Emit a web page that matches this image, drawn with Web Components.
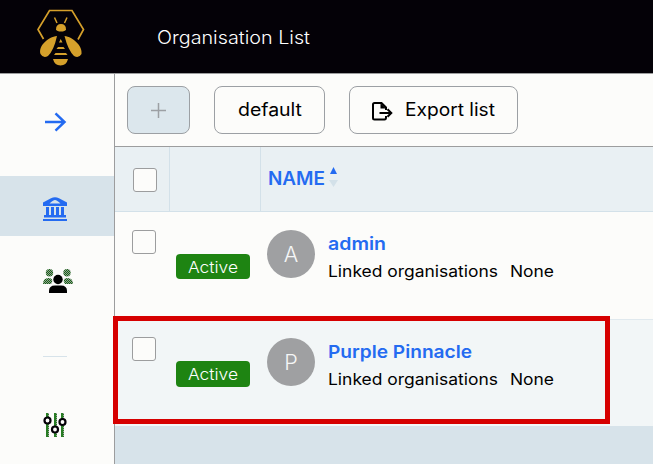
<!DOCTYPE html>
<html lang="en"><head><meta charset="utf-8"><title>Organisation List</title>
<style>body{margin:0;background:#fcfcfa;font-family:Inter,"Liberation Sans",sans-serif;color:#000;overflow:hidden}</style></head><body>
<org-app></org-app>
<script>
const define=(name,html,setup)=>customElements.define(name,class extends HTMLElement{
  connectedCallback(){
    if(this.shadowRoot)return;
    const t=document.createElement('template');
    t.innerHTML='<style>*{box-sizing:border-box}svg{display:block}</style>'+(typeof html==='function'?html(this):html);
    this.attachShadow({mode:'open'}).append(t.content.cloneNode(true));
    if(setup)setup(this);
  }
});
// Widens its letters so that the label has the given width.
define('fit-text','<style>:host{display:inline-block;white-space:pre;text-align:left}span{display:inline-block;transform-origin:0 50%}</style><span><slot></slot></span>',el=>{
  const s=el.shadowRoot.querySelector('span'),w=+el.getAttribute('width');
  s.style.transform='scaleX('+w/s.getBoundingClientRect().width+')';
  el.style.width=w+'px';
});
define('bee-logo',`<style>:host{display:block;width:50px;height:60px}</style>
<svg width="50" height="60" viewBox="36 8 50 60" fill="#d5a02b"><path d="M43.5 39 38 29.5 49.5 10.5H72L83.5 29.5 78 39.5" fill="none" stroke="#d5a02b" stroke-width="1.7"/>
<path d="M54.5 17.5 57 23M67 17.5 64.5 23" fill="none" stroke="#d5a02b" stroke-width="1.5"/><path d="M56 29.5Q56 24 61 24Q66 24 66 29.5Q65 31.5 61 31.5Q57 31.5 56 29.5Z"/>
<path d="M57 36Q54 50 48 56Q43 58.500 40.500 54C38 46 48 37 57 36ZM64.500 36Q68 50 74 56Q79 58.500 81.500 54C83 46 73 37 64.500 36Z"/>
<path d="M60.700 39 62.500 42.500H59ZM58 47H63.500L65 49H56.500ZM55.500 53H66L67.500 55H54ZM53 59H68Q66.500 65.500 60.500 65.500Q54.500 65.500 53 59Z"/></svg>`);
define('app-header',`<style>:host{display:flex;height:74px;box-sizing:border-box;padding:0 36px;background:#040107;border-bottom:1px solid #9c9d9e;color:#fff;font-size:18px;font-weight:300}bee-logo{margin:8px 71px 0 0}.t{line-height:24px;margin-top:26px}</style><bee-logo></bee-logo><div class="t"><slot></slot></div>`);
define('side-bar',`<style>:host{display:flex;flex-direction:column;box-sizing:border-box;width:115px;background:#fcfcfa;border-right:1px solid #9c9d9e}
div{height:60px;padding-left:43px;display:flex;align-items:center;flex:none}.a{height:102px;padding-bottom:6px}.on{background:#d7e3ea}hr{border:0;border-top:1px solid #d7e3ea;width:24px;margin:45px 0 25px 43px}</style>
<div class="a"><svg width="24" height="24" fill="none" stroke="#246bf1" stroke-width="2.500"><path d="M2 12H22M12.500 3.300 21.500 12 12.500 20.700"/></svg></div>
<div class="on" style="padding-top:6px"><svg width="24" height="24" fill="#246bf1"><path fill-rule="evenodd" d="M0 5.500 8 1.200Q12-.5 16 1.200L24 5.500V9H0ZM6.500 6.500H17.500Q14 3 12 3T6.500 6.500Z"/><path d="M3 10H6V18H3ZM8 10H11V18H8ZM13 10H16V18H13ZM18 10H21V18H18ZM1 18H23V20.500H1ZM0 22H24V24H0Z"/></svg></div>
<div style="height:90px"><svg width="30" height="24" shape-rendering="auto"><defs><pattern id="d" width="2" height="2" patternUnits="userSpaceOnUse"><path fill="#999" d="M0 0H2V2H0Z"/><path fill="#126b10" d="M0 0H1V1H0ZM1 1H2V2H1Z"/></pattern></defs><g fill="url(#d)"><circle cx="6.500" cy="3.700" r="3.700"/><circle cx="24" cy="3.700" r="3.700"/><path d="M0 15Q0 9 5.500 9Q9 9 9.500 12L8 15ZM30 15Q30 9 24.500 9Q21 9 20.500 12L22 15Z"/></g><circle cx="15" cy="10.500" r="5.700" fill="#fcfcfa"/><circle cx="15" cy="10.500" r="4.700"/><path d="M6 24V22Q6 16.500 12 16.500H18Q24 16.500 24 22V24Z"/></svg></div>
<hr style="margin-top:30px"><div style="height:86px"><svg width="24" height="24"><g stroke="#287d24" stroke-width="3"><path d="M4.500 0V24M12.500 0V24M19.500 0V24"/></g><g stroke="#a8a8a8" stroke-dasharray="1 1"><path d="M5.500 0V24M13.500 0V24M20.500 0V24"/></g><g fill="#fcfcfa" stroke="#040107" stroke-width="2.200"><circle cx="4.500" cy="7.500" r="3"/><circle cx="12" cy="16.500" r="3"/><circle cx="19.500" cy="9" r="3"/></g></svg></div>`);
define('tool-button',`<style>:host{display:flex;align-items:center;justify-content:center;height:48px;border:1px solid #9ca0a4;border-radius:8px;font-size:18px;line-height:24px;box-sizing:border-box}:host([muted]){background:#dce7ed}</style><slot></slot>`);
define('tool-bar',`<style>:host{display:flex;gap:24px;height:73px;box-sizing:border-box;padding:12px 12px;border-bottom:1px solid #9c9d9e}svg{margin-right:12px}</style>
<tool-button muted style="width:63px"><svg style="margin:0" width="15" height="15" stroke="#9ca0a4" stroke-width="1.500"><path d="M0 7.500H15M7.500 0V15"/></svg></tool-button>
<tool-button style="width:111px"><fit-text width="64">default</fit-text></tool-button>
<tool-button style="width:169px"><svg style="margin-top:2px" width="21" height="19" fill="none" stroke="#000" stroke-width="2"><path d="M14 8V5.500L9.500 1H2.500Q1 1 1 2.500V16Q1 17.500 2.500 17.500H12.500Q14 17.500 14 15.500V14M7.500 11H19M15.500 7.200 19.300 11 15.500 14.800"/><path d="M8.500 1V6.500H14Z" fill="#000" stroke="none"/></svg><fit-text width="90">Export list</fit-text></tool-button>`);
define('check-box',`<style>:host{display:block;box-sizing:border-box;width:24px;height:24px;border:1px solid #9c9d9e;border-radius:3px;background:#fcfcfa;flex:none}</style>`);
define('table-head',`<style>:host{display:grid;grid-template-columns:55px 91px 1fr;height:65px;box-sizing:border-box;background:#e9f0f3;border-bottom:1px solid #d3e1e9;color:#246bf1}div{border-right:1px solid #d3e1e9}check-box{margin:21px 0 0 18px}.n{border:0;display:flex;padding:20px 0 0 7px;font-size:18px;line-height:24px;font-weight:600}svg{margin:0 0 0 4px}</style>
<div><check-box></check-box></div><div></div><div class="n"><fit-text width="57">NAME</fit-text><svg width="9" height="22"><path fill="#246bf1" d="M4.500 0 8 7H1Z"/><path fill="#d3e1e9" d="M0 13H9L4.500 20Z"/></svg></div>`);
define('org-row',el=>`<style>:host{display:grid;grid-template-columns:61px 91px 60px 1fr;height:108px;box-sizing:border-box;border-bottom:1px solid #e0e9ee}:host([shade]){background:#f2f6f7;height:106px;border:0}
check-box{margin:18px 0 0 17px}.b{width:74px;height:25px;margin-top:42px;border-radius:4px;background:#1e8412;color:#fff;font-size:16.500px;line-height:26px;text-align:center;font-weight:300}.v{width:48px;height:48px;margin-top:18px;border-radius:50%;background:#9fa0a2;color:#f5f6f6;font-size:21.500px;line-height:49px;text-align:center;font-weight:300}
.c{padding:20px 0 0 1px}.h{font-size:17.500px;line-height:24px;color:#246bf1;font-weight:600}.l{display:flex;gap:12px;font-size:16px;line-height:20px;margin-top:5px}
:host([shade]) check-box{margin-top:17px}:host([shade]) .b{margin-top:41px;height:26px}</style>
<check-box></check-box><div class="b"><fit-text width="50">Active</fit-text></div><div class="v">${el.getAttribute('initial')}</div><div class="c"><div class="h"><fit-text width="${el.getAttribute('w')}">${el.getAttribute('name')}</fit-text></div><div class="l"><fit-text width="170">Linked organisations</fit-text><fit-text width="44">None</fit-text></div></div>`);
define('focus-frame',`<style>:host{position:absolute;left:113px;top:316px;width:497px;height:108px;box-sizing:border-box;border:5px solid #d60000}</style>`);
define('org-app',`<style>:host{display:block;position:relative;width:653px;height:464px;overflow:hidden}.m{display:flex;height:390px}main{flex:1;background:#d7e3ea}.p{background:#fcfcfa}</style>
<app-header><fit-text width="153">Organisation List</fit-text></app-header><div class="m"><side-bar></side-bar><main><div class="p"><tool-bar></tool-bar><table-head></table-head><org-row initial="A" name="admin" w="58"></org-row><org-row shade initial="P" name="Purple Pinnacle" w="144"></org-row></div></main></div><focus-frame></focus-frame>`);
</script></body></html>
